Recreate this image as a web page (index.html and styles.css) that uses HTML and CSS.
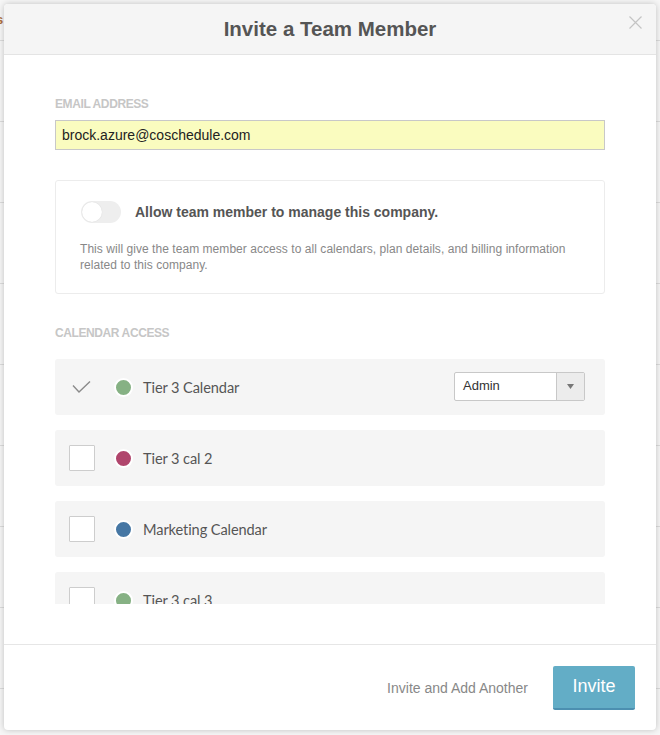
FILE: index.html
```html
<!DOCTYPE html>
<html>
<head>
<meta charset="utf-8">
<link rel="stylesheet" href="styles.css">
</head>
<body>
<div class="page">
  <div class="page-row"><span class="page-link">s</span></div>
  <div class="page-row"></div>
  <div class="page-row"></div>
  <div class="page-row"></div>
  <div class="page-row"></div>
  <div class="page-row"></div>
  <div class="page-row"></div>
  <div class="page-row"></div>
  <div class="page-row"></div>
</div>

<div class="modal">
  <header class="modal-header">
    <h1 class="modal-title">Invite a Team Member</h1>
    <button class="close" aria-label="Close">
      <svg width="13" height="13" viewBox="0 0 13 13"><path d="M0.5 0.5 L12.5 12.5 M12.5 0.5 L0.5 12.5" stroke="#c4c4c4" stroke-width="1.2" fill="none"/></svg>
    </button>
  </header>

  <div class="modal-body">
    <div class="field-label">Email Address</div>
    <div class="email-input">brock.azure@coschedule.com</div>

    <div class="manage-box">
      <div class="manage-head">
        <span class="toggle"><span class="knob"></span></span>
        <span class="manage-title">Allow team member to manage this company.</span>
      </div>
      <p class="manage-desc">This will give the team member access to all calendars, plan details, and billing information related to this company.</p>
    </div>

    <div class="field-label access-label">Calendar Access</div>

    <div class="cal-list">
      <div class="cal-row">
        <span class="check">
          <svg width="26" height="26" viewBox="0 0 26 26"><path d="M4 11.5 L10 18 L21 7.5" stroke="#8a8a8a" stroke-width="1.4" fill="none"/></svg>
        </span>
        <span class="dot dot-green"></span>
        <span class="cal-name">Tier 3 Calendar</span>
        <div class="select">
          <span class="select-value">Admin</span>
          <span class="select-arrow"><svg width="7" height="5" viewBox="0 0 7 5"><path d="M0 0 H7 L3.5 5 Z" fill="#777"/></svg></span>
        </div>
      </div>
      <div class="cal-row">
        <span class="checkbox"></span>
        <span class="dot dot-red"></span>
        <span class="cal-name">Tier 3 cal 2</span>
      </div>
      <div class="cal-row">
        <span class="checkbox"></span>
        <span class="dot dot-blue"></span>
        <span class="cal-name">Marketing Calendar</span>
      </div>
      <div class="cal-row">
        <span class="checkbox"></span>
        <span class="dot dot-green"></span>
        <span class="cal-name">Tier 3 cal 3</span>
      </div>
    </div>
  </div>

  <footer class="modal-footer">
    <span class="secondary-action">Invite and Add Another</span>
    <button class="primary-btn">Invite</button>
  </footer>
</div>
</body>
</html>
```

FILE: styles.css
```css
* { box-sizing: border-box; }

html, body {
  margin: 0;
  padding: 0;
}

body {
  width: 660px;
  height: 735px;
  overflow: hidden;
  background: #f6f6f6;
  font-family: "Liberation Sans", Arial, sans-serif;
  position: relative;
}

.page {
  display: flex;
  flex-direction: column;
}

.page-row {
  height: 81px;
  border-bottom: 1px solid #dcdcdc;
  position: relative;
}

.page-row:first-child {
  height: 41px;
}

.page-link {
  display: block;
  padding: 12px 0 0 0;
  margin-left: -4px;
  font-size: 13px;
  font-weight: bold;
  color: #b0703d;
}

.modal {
  position: absolute;
  top: 4px;
  left: 4px;
  width: 652px;
  height: 726px;
  background: #fff;
  border-radius: 4px;
  box-shadow: 0 0 6px rgba(0, 0, 0, 0.22);
  display: flex;
  flex-direction: column;
  overflow: hidden;
}

.modal-header {
  height: 51px;
  background: #f5f5f5;
  border-bottom: 1px solid #e4e4e4;
  display: flex;
  align-items: center;
  justify-content: center;
  position: relative;
  flex-shrink: 0;
}

.modal-title {
  margin: 0;
  font-size: 20.5px;
  font-weight: bold;
  color: #555;
  letter-spacing: 0;
}

.close {
  position: absolute;
  top: 12px;
  right: 14px;
  background: none;
  border: 0;
  padding: 0;
  width: 13px;
  height: 13px;
  display: block;
}

.close svg { display: block; }

.modal-body {
  flex: 1;
  padding: 42px 51px 40px;
  display: flex;
  flex-direction: column;
}

.field-label {
  font-size: 12px;
  line-height: 14px;
  font-weight: bold;
  text-transform: uppercase;
  color: #c6c6c6;
  letter-spacing: -0.4px;
  margin-bottom: 9px;
}

.email-input {
  height: 30px;
  border: 1px solid #c8c8c8;
  background: #fafcbf;
  font-size: 14px;
  line-height: 28px;
  color: #222;
  padding-left: 6px;
  margin-bottom: 30px;
}

.manage-box {
  border: 1px solid #ececec;
  border-radius: 3px;
  padding: 19px 24px 20px;
}

.manage-head {
  display: flex;
  align-items: center;
  gap: 14px;
  height: 23px;
}

.toggle {
  width: 40px;
  height: 22px;
  border-radius: 11px;
  background: #eeeeee;
  margin-left: 1px;
  position: relative;
  display: block;
  flex-shrink: 0;
}

.knob {
  position: absolute;
  top: 1px;
  left: 1px;
  width: 20px;
  height: 20px;
  border-radius: 50%;
  background: #fff;
  box-shadow: 0 0 1px rgba(0, 0, 0, 0.15);
}

.manage-title {
  font-size: 14px;
  font-weight: bold;
  color: #555;
}

.manage-desc {
  margin: 18px 0 0;
  font-size: 12px;
  line-height: 16px;
  color: #888;
  letter-spacing: 0.05px;
}

.access-label {
  margin-top: 32px;
  margin-bottom: 19px;
}

.cal-list {
  height: 245px;
  overflow: hidden;
  display: flex;
  flex-direction: column;
  gap: 15px;
}

.cal-row {
  height: 56px;
  flex-shrink: 0;
  background: #f5f5f5;
  border-radius: 3px;
  display: flex;
  align-items: center;
  padding: 0 20px 0 14px;
}

.check, .checkbox {
  width: 26px;
  height: 26px;
  flex-shrink: 0;
  display: block;
}

.check svg { display: block; }

.checkbox {
  background: #fff;
  border: 1px solid #cdcdcd;
  border-radius: 1px;
}

.dot {
  width: 19px;
  height: 19px;
  border-radius: 50%;
  border: 2px solid #fff;
  margin-left: 19px;
  flex-shrink: 0;
}

.dot-green { background: #86b184; }
.dot-red { background: #b0456c; }
.dot-blue { background: #4677a4; }

.cal-name {
  margin-left: 10px;
  font-family: Lato, "Open Sans", sans-serif;
  font-size: 14.6px;
  color: #555;
  letter-spacing: -0.1px;
}

.select {
  margin-left: auto;
  margin-top: -1px;
  width: 131px;
  height: 29px;
  border: 1px solid #c8c8c8;
  border-radius: 2px;
  background: #fff;
  display: flex;
  align-items: stretch;
}

.select-value {
  flex: 1;
  padding-left: 8px;
  font-size: 13px;
  line-height: 25px;
  color: #333;
}

.select-arrow {
  width: 28px;
  background: #ececec;
  border-left: 1px solid #c8c8c8;
  display: flex;
  align-items: center;
  justify-content: center;
}

.select-arrow svg { display: block; }

.modal-footer {
  height: 86px;
  flex-shrink: 0;
  border-top: 1px solid #e6e6e6;
  display: flex;
  align-items: center;
  justify-content: flex-end;
  padding: 0 21px 0 0;
  gap: 25px;
}

.secondary-action {
  font-size: 14px;
  color: #888;
}

.primary-btn {
  width: 82px;
  height: 44px;
  border: 0;
  border-bottom: 2px solid #4c8fb0;
  border-radius: 2px;
  background: #63adc6;
  color: #fff;
  font-family: "Liberation Sans", Arial, sans-serif;
  font-size: 18px;
  padding: 0;
}
```
